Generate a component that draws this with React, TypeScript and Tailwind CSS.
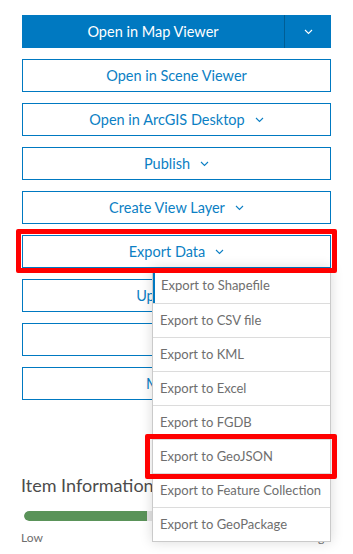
import type { ReactNode } from 'react'

const font = { fontFamily: 'Lato, "Noto Sans", sans-serif' }

function Chevron({ className = '' }: { className?: string }) {
  return (
    <svg width="9" height="6" viewBox="0 0 9 6" className={className} fill="none">
      <polyline points="1,1 4.5,4.5 8,1" stroke="currentColor" strokeWidth="1.1" />
    </svg>
  )
}

function OutlineButton({ children, caret = false }: { children: ReactNode; caret?: boolean }) {
  return (
    <button className="h-[33px] w-full border border-[#0079c1] bg-white text-[#0c7fc4] text-[14.5px] flex items-center justify-center gap-[10px]">
      <span>{children}</span>
      {caret && <Chevron />}
    </button>
  )
}

const exportItems = [
  'Export to Shapefile',
  'Export to CSV file',
  'Export to KML',
  'Export to Excel',
  'Export to FGDB',
  'Export to GeoJSON',
  'Export to Feature Collection',
  'Export to GeoPackage',
]

export default function App() {
  return (
    <div className="relative w-[353px] h-[554px] overflow-hidden bg-white" style={font}>
      <div className="pt-[15px] pl-[22px] w-[331px]">
        <div className="flex flex-col gap-[11px]">
          <div className="h-[33px] flex bg-[#0079c1] text-white text-[14.5px]">
            <button className="flex-1 flex items-center justify-center">Open in Map Viewer</button>
            <div className="w-px bg-[#005e95]" />
            <button className="w-[46px] flex items-center justify-center">
              <Chevron />
            </button>
          </div>
          <OutlineButton>Open in Scene Viewer</OutlineButton>
          <OutlineButton caret>Open in ArcGIS Desktop</OutlineButton>
          <OutlineButton caret>Publish</OutlineButton>
          <OutlineButton caret>Create View Layer</OutlineButton>
          <OutlineButton caret>Export Data</OutlineButton>
          <OutlineButton>Update Data</OutlineButton>
          <OutlineButton>Share</OutlineButton>
          <OutlineButton>Metadata</OutlineButton>
        </div>

        <h2 className="mt-[72px] -ml-px text-[18px] leading-[27px] text-[#4c4c4c]">Item Information</h2>
        <div className="mt-[12px] h-[10px] rounded-full bg-[#e4e4e4] overflow-hidden ml-[2px]">
          <div className="h-full w-2/5 bg-[#5a9359] rounded-l-full" />
        </div>
        <div className="mt-[9px] flex justify-between text-[12px] leading-[16px] text-[#6e6e6e]">
          <span className="-ml-px">Low</span>
          <span>High</span>
        </div>
      </div>

      {/* dropdown menu */}
      <div className="absolute left-[152px] top-[268px] w-[179px] bg-white border border-[#cacaca] shadow-[0_0_12px_rgba(0,0,0,0.15)]">
        {exportItems.map((item, i) => (
          <div
            key={item}
            className={
              i === 0
                ? 'h-[34px] flex items-center pl-[6px] text-[13px] text-[#6e6e6e] border-l-2 border-[#0079c1]'
                : 'h-[34px] flex items-center pl-[7px] text-[13px] text-[#6e6e6e] border-t border-[#dcdcdc]'
            }
          >
            {item}
          </div>
        ))}
      </div>

      {/* annotation boxes */}
      <div className="absolute left-[16px] top-[229px] w-[321px] h-[44px] border-[5px] border-[#ff0000] rounded-[2px]" />
      <div className="absolute left-[145px] top-[434px] w-[192px] h-[45px] border-[5px] border-[#ff0000] rounded-[2px]" />
    </div>
  )
}
